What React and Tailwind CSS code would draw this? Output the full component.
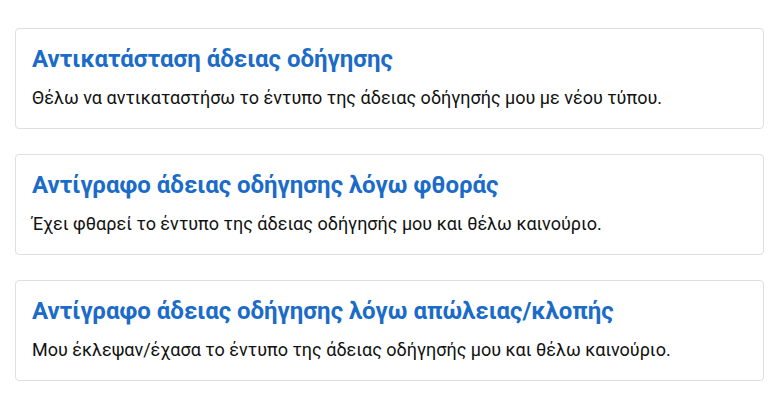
const items = [
  {
    title: "Αντικατάσταση άδειας οδήγησης",
    text: "Θέλω να αντικαταστήσω το έντυπο της άδειας οδήγησής μου με νέου τύπου.",
  },
  {
    title: "Αντίγραφο άδειας οδήγησης λόγω φθοράς",
    text: "Έχει φθαρεί το έντυπο της άδειας οδήγησής μου και θέλω καινούριο.",
  },
  {
    title: "Αντίγραφο άδειας οδήγησης λόγω απώλειας/κλοπής",
    text: "Μου έκλεψαν/έχασα το έντυπο της άδειας οδήγησής μου και θέλω καινούριο.",
  },
];

export default function App() {
  return (
    <div className="min-h-screen bg-white px-[15px] pt-[28px] font-['Roboto',sans-serif]">
      <div className="flex flex-col gap-[25px]">
        {items.map((item, index) => (
          <div
            key={index}
            className="h-[101px] rounded-[4px] border border-[#dfdfdf] px-4 pt-[16px]"
          >
            <h2 className="text-[24px] font-bold leading-[1.2] text-[#1b6bc8]">
              {item.title}
            </h2>
            <p className="mt-[10px] text-[18px] leading-[1.5] text-[#111]">
              {item.text}
            </p>
          </div>
        ))}
      </div>
    </div>
  );
}
